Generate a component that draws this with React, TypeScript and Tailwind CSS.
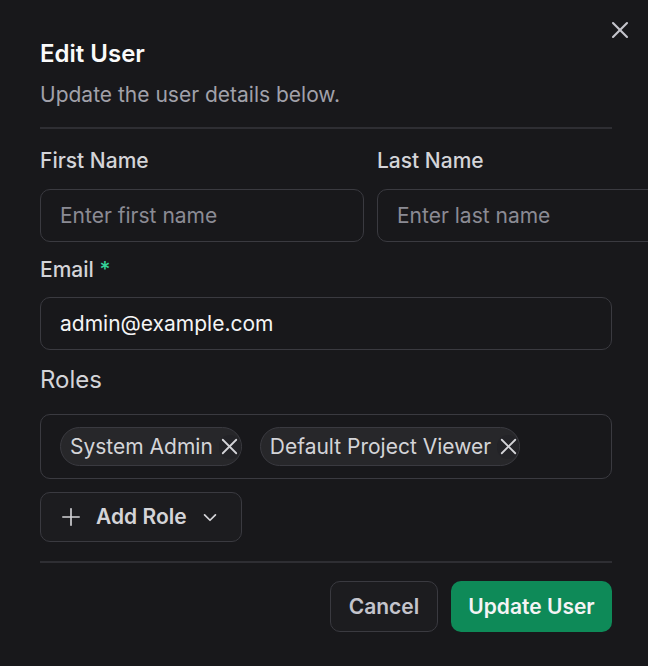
import React from "react";

const XIcon = ({ size = 18, strokeWidth = 2, className = "" }: { size?: number; strokeWidth?: number; className?: string }) => (
  <svg width={size} height={size} viewBox="0 0 24 24" fill="none" stroke="currentColor" strokeWidth={strokeWidth} strokeLinecap="round" strokeLinejoin="round" className={className}>
    <path d="M18 6 6 18" />
    <path d="m6 6 12 12" />
  </svg>
);

const Chip = ({ label }: { label: string }) => (
  <div className="flex h-[39px] items-center rounded-full border border-[#3a3a40] bg-[#27272a] pl-[9px] pr-0 text-[21px] text-[#d4d4d8]">
    <span>{label}</span>
    <span className="ml-[6px] flex h-[24px] w-[22px] shrink-0 items-center justify-center rounded-full bg-[#232327]">
      <XIcon size={27} strokeWidth={1.6} className="shrink-0 text-[#d4d4d8]" />
    </span>
  </div>
);

export default function App() {
  return (
    <div
      className="relative h-[666px] w-[648px] overflow-hidden bg-[#18181b]"
      style={{ fontFamily: "Inter, 'Noto Sans', sans-serif" }}
    >
      <button className="absolute right-[14px] top-[16px] text-[#c4c4cc]">
        <XIcon size={28} strokeWidth={1.8} />
      </button>
      <div className="ml-[40px] w-[572px] pt-[38px]">
        <h2 className="text-[24px] font-semibold leading-[32px] text-[#fafafa]">Edit User</h2>
        <p className="mt-[11px] text-[21px] leading-[28px] text-[#a1a1aa]">Update the user details below.</p>
        <div className="mt-[18px] h-[2px] w-full bg-[#2e2e33]" />

        <div className="mt-[18px] flex gap-[13px]">
          <div className="flex w-[324px] shrink-0 flex-col">
            <label className="text-[21px] font-medium leading-[28px] text-[#d4d4d8]">First Name</label>
            <div className="mt-[14px] flex h-[53px] items-center rounded-[10px] border border-[#3a3a40] bg-[#18181b] px-[19px] text-[21px] text-[#8b8b94]">
              Enter first name
            </div>
          </div>
          <div className="flex w-[324px] shrink-0 flex-col">
            <label className="text-[21px] font-medium leading-[28px] text-[#d4d4d8]">Last Name</label>
            <div className="mt-[14px] flex h-[53px] items-center rounded-[10px] border border-[#3a3a40] bg-[#18181b] px-[19px] text-[21px] text-[#8b8b94]">
              Enter last name
            </div>
          </div>
        </div>

        <label className="mt-[14px] block text-[21px] font-medium leading-[28px] text-[#d4d4d8]">
          Email <span className="text-[#34d399]">*</span>
        </label>
        <div className="mt-[13px] flex h-[53px] items-center rounded-[10px] border border-[#3a3a40] bg-[#18181b] px-[19px] text-[21px] text-[#f4f4f5]">
          admin@example.com
        </div>

        <label className="mt-[16px] block text-[24px] leading-[28px] text-[#d4d4d8]">Roles</label>
        <div className="mt-[20px] flex h-[65px] items-center gap-[18px] rounded-[10px] border border-[#3a3a40] px-[19px]">
          <Chip label="System Admin" />
          <Chip label="Default Project Viewer" />
        </div>

        <button className="mt-[13px] flex h-[50px] items-center rounded-[10px] border border-[#3a3a40] bg-[#1c1c1f] pl-[16px] pr-[18px] text-[21px] font-semibold text-[#d4d4d8]">
          <svg width="28" height="28" viewBox="0 0 24 24" fill="none" stroke="currentColor" strokeWidth={1.4} strokeLinecap="round">
            <path d="M5 12h14" />
            <path d="M12 5v14" />
          </svg>
          <span className="ml-[11px]">Add Role</span>
          <svg className="ml-[10px]" width="26" height="26" viewBox="0 0 24 24" fill="none" stroke="currentColor" strokeWidth={1.6} strokeLinecap="round" strokeLinejoin="round">
            <path d="m7 10 5 5 5-5" />
          </svg>
        </button>

        <div className="mt-[19px] h-[2px] w-full bg-[#2e2e33]" />

        <div className="mt-[18px] flex justify-end gap-[13px]">
          <button className="h-[51px] w-[108px] rounded-[10px] border border-[#3a3a40] bg-[#1c1c1f] text-[21px] font-semibold text-[#c4c4cc]">
            Cancel
          </button>
          <button className="h-[51px] w-[161px] rounded-[10px] bg-[#0e8a58] text-[21px] font-semibold text-[#f4f4f5]">
            Update User
          </button>
        </div>
      </div>
    </div>
  );
}
